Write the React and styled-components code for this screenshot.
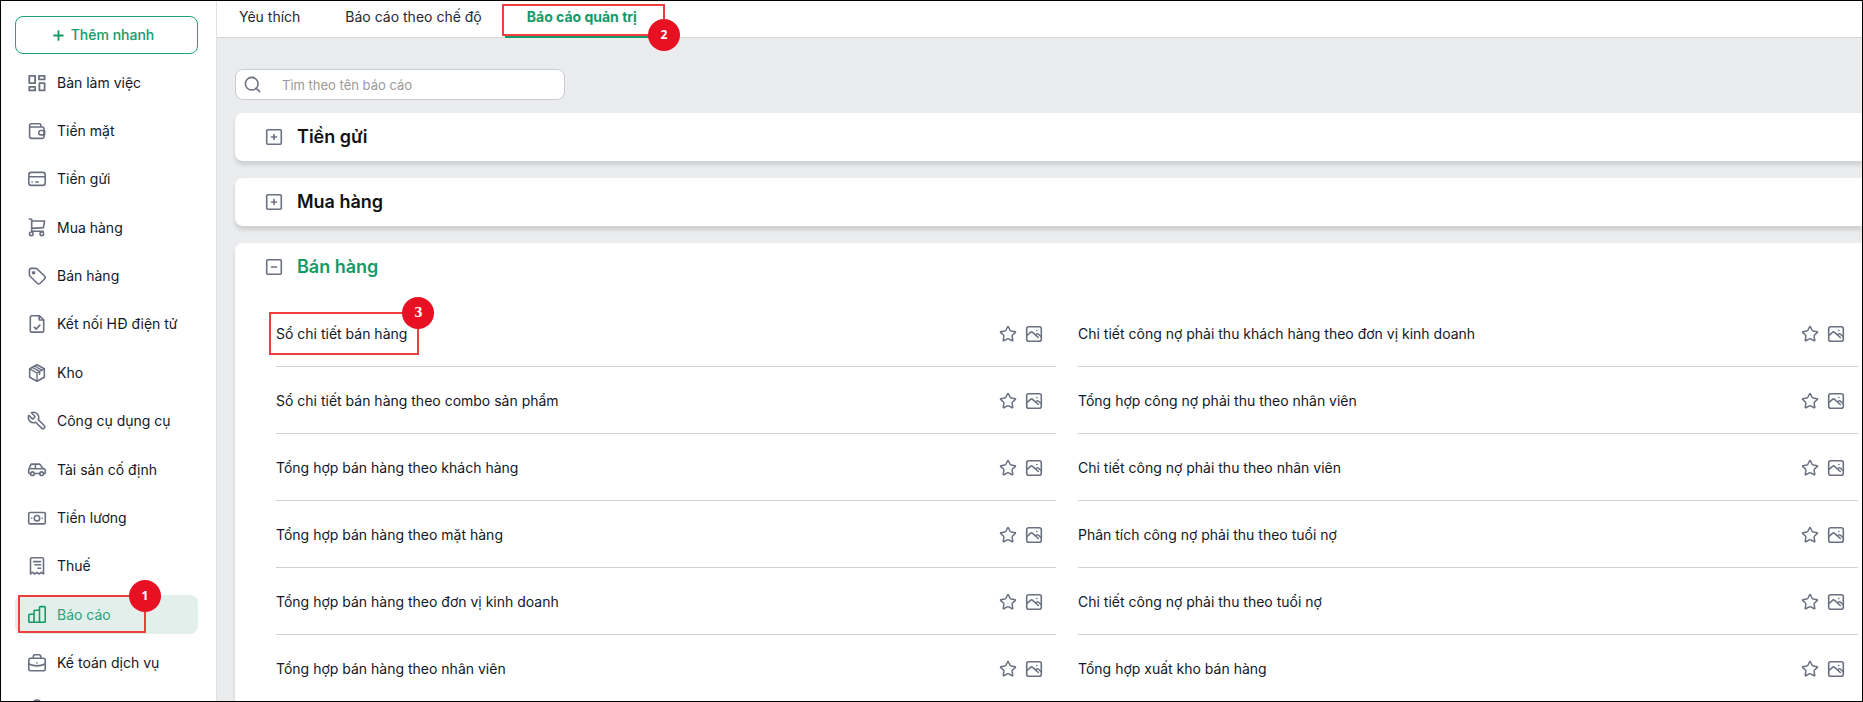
import { useState } from 'react';
import styled, { createGlobalStyle } from 'styled-components';
import { Plus, Search, Star } from 'lucide-react';

const GlobalStyle = createGlobalStyle`
    * {
        box-sizing: border-box;
    }
    body {
        margin: 0;
        font-family: Inter, "Noto Sans", sans-serif;
        font-size: 14px;
        line-height: 20px;
        color: #111827;
    }
    button, input {
        font: inherit;
    }
    ul {
        list-style: none;
        margin: 0;
        padding: 0;
    }
`
const Page = styled.div`
    display: flex;
    height: 100vh;
    overflow: hidden;
    border: 1px solid #000;
    background: #ebecee;
`
const Sidebar = styled.aside`
    display: flex;
    flex-direction: column;
    flex: none;
    width: 216px;
    padding: 15px 18px 0 14px;
    background: #fff;
    border-right: 1px solid #e0e2e5;
`
const QuickAdd = styled.button`
    display: flex;
    align-items: center;
    justify-content: center;
    flex: none;
    gap: 5px;
    height: 38px;
    padding: 0 8px 0 0;
    color: #129b66;
    font-weight: 500;
    background: #fff;
    border: 1px solid #1aa571;
    border-radius: 8px;
    cursor: pointer;
`
/* the last entry runs past the bottom edge */
const NavList = styled.ul`
    display: flex;
    flex-direction: column;
    flex: 1;
    justify-content: space-between;
    margin-top: 9px;
    margin-bottom: -30px;
`
const NavItem = styled.li`
    position: relative;
`
const NavLink = styled.a`
    display: flex;
    align-items: center;
    gap: 10px;
    height: 39px;
    padding-left: 12px;
    color: ${p => p.$active ? '#2fa277' : '#111827'};
    background: ${p => p.$active ? '#e3efea' : 'transparent'};
    border-radius: 8px;
    text-decoration: none;
    white-space: nowrap;

    svg {
        color: ${p => p.$active ? '#129b66' : '#6b7080'};
    }
`
const Main = styled.main`
    flex: 1;
    min-width: 0;
`
const Tabs = styled.nav`
    display: flex;
    gap: 1px;
    height: 37px;
    background: #fff;
    border-bottom: 1px solid #d5d7da;
`
const Tab = styled.a`
    position: relative;
    padding: 6px 22px;
    color: ${p => p.$active ? '#129b66' : '#1f2937'};
    font-weight: ${p => p.$active ? 700 : 400};
    border-bottom: ${p => p.$active ? '3px solid #129b66' : 'none'};
    margin-bottom: -1px;
    text-decoration: none;
    white-space: nowrap;
`
const Content = styled.div`
    display: flex;
    flex-direction: column;
    gap: 17px;
    padding: 31px 0 0 18px;
`
const SearchBox = styled.label`
    display: flex;
    align-items: center;
    gap: 20px;
    width: 330px;
    height: 31px;
    margin-bottom: -4px;
    padding: 0 7px;
    color: #6b7080;
    background: #fff;
    border: 1px solid #c9ccd2;
    border-radius: 8px;

    input {
        flex: 1;
        min-width: 0;
        padding: 0;
        font-size: 13px;
        border: none;
        outline: none;
        background: transparent;
    }
    input::placeholder {
        color: #9a9a9a;
    }
`
const Card = styled.section`
    background: #fff;
    border-radius: 8px 0 0 8px;
    box-shadow: 0 4px 4px rgba(0, 0, 0, 0.12);
`
const CardHead = styled.button`
    display: flex;
    align-items: center;
    gap: 14px;
    width: 100%;
    height: 48px;
    padding: 0 30px;
    color: ${p => p.$open ? '#129b66' : '#111111'};
    font-size: 18px;
    font-weight: 600;
    background: none;
    border: none;
    cursor: pointer;

    svg {
        color: #6b7080;
    }
`
const ReportGrid = styled.ul`
    display: grid;
    grid-template-columns: 1fr 1fr;
    column-gap: 22px;
    padding: 9px 4px 24px 41px;
`
const Report = styled.li`
    display: flex;
    align-items: center;
    gap: 8px;
    height: 67px;
    padding: 2px 13px 0 0;
    border-bottom: 1px solid #cdd0d5;
`
const ReportLink = styled.a`
    position: relative;
    margin-right: auto;
    color: #111827;
    text-decoration: none;
`
const IconButton = styled.button`
    display: flex;
    padding: 0;
    color: #6b7080;
    background: none;
    border: none;
    cursor: pointer;
`
const Callout = styled.span`
    position: absolute;
    inset: ${p => p.$inset};
    border: 2px solid #f03e3e;
    pointer-events: none;
`
const CalloutBadge = styled.b`
    position: absolute;
    top: ${p => p.$low ? 'auto' : '-17px'};
    bottom: ${p => p.$low ? '-17px' : 'auto'};
    right: -17px;
    width: 32px;
    height: 32px;
    color: #fff;
    font: 700 12px/32px ${p => p.$serif ? '"DejaVu Serif", serif' : '"Open Sans", sans-serif'};
    text-align: center;
    background: #e81123;
    border-radius: 50%;
`

function Icon({ size = 20, children }) {
    return (
        <svg
            width={size}
            height={size}
            viewBox={`0 0 ${size} ${size}`}
            fill="none"
            stroke="currentColor"
            strokeWidth="1.6"
            strokeLinecap="round"
            strokeLinejoin="round"
            aria-hidden="true"
        >
            {children}
        </svg>
    )
}

const icons = {
    dashboard: <>
        <path d="M2.3 2.8h5.8v7.4H2.3zM12 2.8h5.6v3.6H12zM2.3 13.8h5.8v3.6H2.3zM12.4 10.2h5.2v7.2h-5.2z" strokeWidth="1.8" />
    </>,
    wallet: <>
        <path d="M13.8 6V3.8a1 1 0 0 0-1-1H4A1.7 1.7 0 0 0 2.6 4.4v11.2A1.8 1.8 0 0 0 4.4 17.4h11a1.5 1.5 0 0 0 1.5-1.5V7.7A1.5 1.5 0 0 0 15.4 6H2.8" />
        <path d="M17.6 9.5h-3.6a2.2 2.2 0 0 0 0 4.4h3.6z" />
    </>,
    card: <>
        <rect x="1.8" y="3.4" width="16.4" height="13" rx="2.5" />
        <path d="M2 7.7h16" />
        <path d="M5 13h.1M8.8 13h2.4" />
    </>,
    cart: <>
        <path d="M2.3 1h1.6a.8.8 0 0 1 .8.8v11.4M4.7 3h12.9l-1.2 6.6-11.7.8M4.7 13.2h11.5" />
        <circle cx="4.3" cy="15.8" r="1.8" />
        <circle cx="14.8" cy="15.8" r="1.8" />
    </>,
    tag: <>
        <path d="M2.4 4v4.7c0 .5.2.9.5 1.3l7.6 7.5c.7.7 1.7.7 2.4 0l4.8-4.8c.7-.7.7-1.7 0-2.4L10 2.9a1.8 1.8 0 0 0-1.3-.5H4A1.6 1.6 0 0 0 2.4 4z" />
        <circle cx="6.6" cy="6.7" r="1" fill="currentColor" />
    </>,
    invoice: <>
        <path d="M12.2 1.7H5a1.7 1.7 0 0 0-1.7 1.7v13A1.7 1.7 0 0 0 5 18.1h10a1.7 1.7 0 0 0 1.7-1.7V6z" />
        <path d="M12.2 1.7V6h4.5M7.2 13.2l2 1.9 3.6-4" />
    </>,
    box: <>
        <path d="M10 1.7l7.3 4.1v8.4L10 18.3l-7.3-4.1V5.8z" />
        <path d="M2.7 5.8L10 10l7.3-4.2M10 10v8.3M5.3 4.3l7.3 4.1v3M7.6 3l7.2 4.2" strokeWidth="1.4" />
    </>,
    wrench: <>
        <path transform="matrix(-.86 0 0 .86 20.3 -.4)" strokeWidth="1.8" d="M14.7 6.3a1 1 0 0 0 0 1.4l1.6 1.6a1 1 0 0 0 1.4 0l3.77-3.77a6 6 0 0 1-7.94 7.94l-6.91 6.91a2.12 2.12 0 0 1-3-3l6.91-6.91a6 6 0 0 1 7.94-7.94l-3.76 3.76z" />
    </>,
    car: <>
        <path d="M3.3 13.5H2.6a.9.9 0 0 1-.9-.9V9.5L3.8 4.8a1 1 0 0 1 1-.7h7.4a1 1 0 0 1 .8.4l3 4 1.4.6a1.5 1.5 0 0 1 .9 1.3v2.3a.9.9 0 0 1-.9.9h-.7M7.7 13.5h5M2 8.7h14M8.4 4.2v4.4" />
        <circle cx="5.5" cy="13.7" r="1.8" />
        <circle cx="14.6" cy="13.7" r="1.8" />
    </>,
    money: <>
        <rect x="1.7" y="4.5" width="16.6" height="11.4" rx="1.5" />
        <circle cx="10" cy="10.2" r="2.7" />
        <path d="M4.7 10.2h.1M15.2 10.2h.1" />
    </>,
    receipt: <>
        <path d="M3.5 18V3.2A1.4 1.4 0 0 1 4.9 1.8h10.2a1.4 1.4 0 0 1 1.4 1.4V18l-2.1-1.7-2.2 1.7L10 16.3 7.8 18l-2.2-1.7z" />
        <path d="M6.6 5.6h7M8 8.7h5.6M11 12.3h2.6" />
    </>,
    report: <>
        <path d="M1.8 10.2a.9.9 0 0 1 .9-.9H7v8H2.7a.9.9 0 0 1-.9-.9zM7 17.3V6.2a.9.9 0 0 1 .9-.9h4.6v12zM12.5 17.3V2.5a.9.9 0 0 1 .9-.9h3.9a.9.9 0 0 1 .9.9v13.9a.9.9 0 0 1-.9.9H7" />
    </>,
    service: <>
        <rect x="1.8" y="5.2" width="16.4" height="12.6" rx="1.7" />
        <path d="M6.3 5V3.2a1.4 1.4 0 0 1 1.4-1.4h4.6a1.4 1.4 0 0 1 1.4 1.4V5M1.9 11c5 2.3 11.2 2.3 16.2 0M10 9.8v.1" />
    </>,
    user: <>
        <circle cx="10" cy="5" r="4" />
        <path d="M3 21c0-12 14-12 14 0" />
    </>,
}

const navItems = [
    { icon: 'dashboard', label: 'Bàn làm việc' },
    { icon: 'wallet', label: 'Tiền mặt' },
    { icon: 'card', label: 'Tiền gửi' },
    { icon: 'cart', label: 'Mua hàng' },
    { icon: 'tag', label: 'Bán hàng' },
    { icon: 'invoice', label: 'Kết nối HĐ điện tử' },
    { icon: 'box', label: 'Kho' },
    { icon: 'wrench', label: 'Công cụ dụng cụ' },
    { icon: 'car', label: 'Tài sản cố định' },
    { icon: 'money', label: 'Tiền lương' },
    { icon: 'receipt', label: 'Thuế' },
    { icon: 'report', label: 'Báo cáo', active: true },
    { icon: 'service', label: 'Kế toán dịch vụ' },
]

const reports = [
    'Sổ chi tiết bán hàng',
    'Chi tiết công nợ phải thu khách hàng theo đơn vị kinh doanh',
    'Sổ chi tiết bán hàng theo combo sản phẩm',
    'Tổng hợp công nợ phải thu theo nhân viên',
    'Tổng hợp bán hàng theo khách hàng',
    'Chi tiết công nợ phải thu theo nhân viên',
    'Tổng hợp bán hàng theo mặt hàng',
    'Phân tích công nợ phải thu theo tuổi nợ',
    'Tổng hợp bán hàng theo đơn vị kinh doanh',
    'Chi tiết công nợ phải thu theo tuổi nợ',
    'Tổng hợp bán hàng theo nhân viên',
    'Tổng hợp xuất kho bán hàng',
]

function Step({ n, inset, serif, low }) {
    return (
        <Callout $inset={inset}>
            <CalloutBadge $serif={serif} $low={low}>{n}</CalloutBadge>
        </Callout>
    )
}

function Group({ title, open, onToggle, children }) {
    return (
        <Card>
            <CardHead type="button" $open={open} aria-expanded={open} onClick={onToggle}>
                <Icon size={18}>
                    <rect x="1.7" y="1.7" width="14.6" height="14.6" rx="1.2" />
                    <path d={open ? 'M6.5 9h5' : 'M6.5 9h5M9 6.5v5'} />
                </Icon>
                {title}
            </CardHead>
            {open ? children : null}
        </Card>
    )
}

export default function App() {
    const [open, setOpen] = useState('Bán hàng');
    const [query, setQuery] = useState('');

    const toggle = title => setOpen(open === title ? '' : title);
    const shown = reports.filter(r => r.toLowerCase().includes(query.toLowerCase()));

    return (
        <Page>
            <GlobalStyle />
            <Sidebar>
                <QuickAdd type="button">
                    <Plus size={15} strokeWidth={3} />
                    Thêm nhanh
                </QuickAdd>
                <NavList>
                    {navItems.map(item => (
                        <NavItem key={item.label}>
                            <NavLink href="#" $active={item.active}>
                                <Icon>{icons[item.icon]}</Icon>
                                {item.label}
                            </NavLink>
                            {item.active ? <Step n={1} inset="0 52px 1px 3px" /> : null}
                        </NavItem>
                    ))}
                    <NavItem>
                        <NavLink href="#" aria-label="Tài khoản">
                            <Icon size={24}>{icons.user}</Icon>
                        </NavLink>
                    </NavItem>
                </NavList>
            </Sidebar>
            <Main>
                <Tabs>
                    <Tab href="#">Yêu thích</Tab>
                    <Tab href="#">Báo cáo theo chế độ</Tab>
                    <Tab href="#" $active>
                        Báo cáo quản trị
                        <Step n={2} inset="3px -6px -1px -3px" low />
                    </Tab>
                </Tabs>
                <Content>
                    <SearchBox>
                        <Search size={19} />
                        <input
                            type="text"
                            placeholder="Tìm theo tên báo cáo"
                            aria-label="Tìm theo tên báo cáo"
                            value={query}
                            onChange={e => setQuery(e.target.value)}
                        />
                    </SearchBox>
                    {['Tiền gửi', 'Mua hàng', 'Bán hàng'].map(title => (
                        <Group
                            key={title}
                            title={title}
                            open={open === title}
                            onToggle={() => toggle(title)}
                        >
                            <ReportGrid>
                                {shown.map(name => (
                                    <Report key={name}>
                                        <ReportLink href="#">
                                            {name}
                                            {name === reports[0] ? <Step n={3} inset="-12px -12px -11px -7px" serif /> : null}
                                        </ReportLink>
                                        <IconButton type="button" aria-label="Yêu thích">
                                            <Star size={18} />
                                        </IconButton>
                                        <IconButton type="button" aria-label="Xem mẫu">
                                            <Icon size={18}>
                                                <rect x="1.7" y="1.7" width="14.6" height="14.6" rx="2" />
                                                <path d="M2 10.5l3.8-3.3c.5-.4 1-.4 1.500 0l6 5.3M10.5 10l1.2-1c.5-.4 1-.4 1.500 0l2.8 2.500M11.8 5.500h.1" />
                                            </Icon>
                                        </IconButton>
                                    </Report>
                                ))}
                            </ReportGrid>
                        </Group>
                    ))}
                </Content>
            </Main>
        </Page>
    )
}
